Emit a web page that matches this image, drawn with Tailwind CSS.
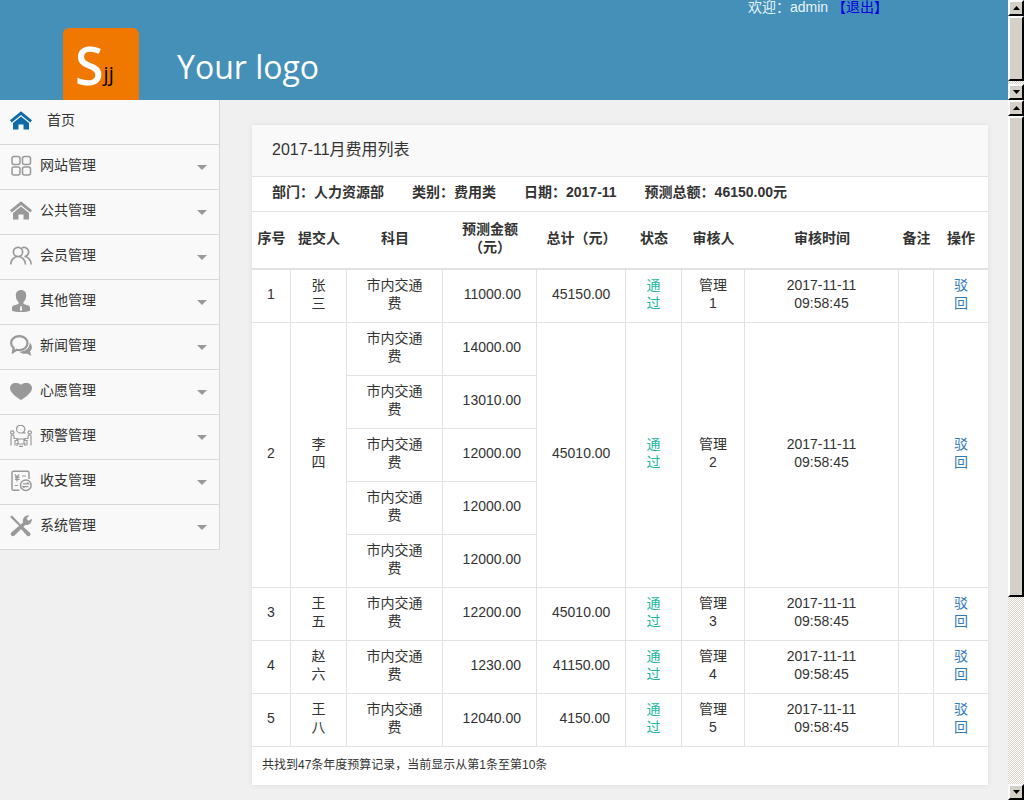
<!DOCTYPE html>
<html lang="zh-CN">
<head>
<meta charset="utf-8">
<meta name="viewport" content="width=device-width, initial-scale=1">
<title>费用列表</title>
<script src="https://cdn.jsdelivr.net/npm/@tailwindcss/browser@4"></script>
</head>
<body class="flex h-screen flex-col overflow-hidden bg-[#f0f0f0] font-['Liberation_Sans','Noto_Sans_CJK_SC',sans-serif] text-sm text-[#333]">

<header class="flex h-[100px] shrink-0 bg-[#4490b9]">
  <div class="flex min-w-0 flex-1 items-start justify-between">
    <div class="flex items-end pl-[63px] pt-7">
      <div class="flex h-[72px] w-[76px] items-start overflow-hidden rounded-t-md bg-[#f07800] pl-3 font-['Open_Sans',sans-serif]">
        <span class="text-[52px] font-semibold leading-[74px] text-white">S</span><span class="text-[20px] leading-[92px] text-black">jj</span>
      </div>
      <p class="pl-[38px] font-['Open_Sans',sans-serif] text-[32px] leading-[66px] text-white">Your logo</p>
    </div>
    <p class="pr-[120px] leading-[14px] text-[#e8f4fb]">欢迎：admin <a href="#" class="text-[#0000dd]">【退出】</a></p>
  </div>
  <div class="flex w-4 shrink-0 flex-col bg-[repeating-conic-gradient(#d4d0c8_0_25%,#ffffff_0_50%)] bg-size-[2px_2px]" aria-hidden="true">
    <div class="flex h-4 items-center justify-center border-2 border-t-white border-l-white border-r-black border-b-black bg-[#d4d0c8]"><svg width="7" height="4" viewBox="0 0 7 4"><path d="M3.5 0L7 4H0z"/></svg></div>
    <div class="h-[65px] border-2 border-t-white border-l-white border-r-black border-b-black bg-[#d4d0c8]"></div>
    <div class="flex-1"></div>
    <div class="flex h-4 items-center justify-center border-2 border-t-white border-l-white border-r-black border-b-black bg-[#d4d0c8]"><svg width="7" height="4" viewBox="0 0 7 4"><path d="M0 0H7L3.5 4z"/></svg></div>
  </div>
</header>

<div class="flex min-h-0 flex-1">
  <nav class="w-[220px] shrink-0">
    <ul id="menu" class="border-r border-[#d8d8d8] bg-[#f9f9f9]"></ul>
  </nav>

  <main class="min-w-0 flex-1 pl-8 pr-5 pt-[25px]">
    <section class="bg-white shadow-[0_0_6px_rgba(0,0,0,0.08)]">
      <h1 class="border-b border-[#e2e2e2] bg-[#f9f9f9] px-5 pt-3 pb-[14px] text-base leading-[25px]">2017-11月费用列表</h1>
      <div class="flex gap-7 border-b border-[#e2e2e2] px-5 pt-[6px] pb-[10px] font-bold leading-[18px]">
        <span>部门：人力资源部</span><span>类别：费用类</span><span>日期：2017-11</span><span>预测总额：46150.00元</span>
      </div>
      <table class="w-full table-fixed border-separate border-spacing-0 text-center leading-[18px]">
        <colgroup>
          <col class="w-[39px]"><col class="w-[56px]"><col class="w-[96px]"><col class="w-[94px]"><col class="w-[89px]"><col class="w-[56px]"><col class="w-[63px]"><col class="w-[154px]"><col class="w-[35px]"><col class="w-[54px]">
        </colgroup>
        <thead>
          <tr class="h-[58px]">
            <th class="border-b-2 border-[#e2e2e2] pb-1">序号</th><th class="border-b-2 border-[#e2e2e2] pb-1">提交人</th><th class="border-b-2 border-[#e2e2e2] pb-1">科目</th><th class="border-b-2 border-[#e2e2e2] px-2 pb-1">预测金额（元）</th><th class="border-b-2 border-[#e2e2e2] pb-1">总计（元）</th><th class="border-b-2 border-[#e2e2e2] pb-1">状态</th><th class="border-b-2 border-[#e2e2e2] pb-1">审核人</th><th class="border-b-2 border-[#e2e2e2] pb-1">审核时间</th><th class="border-b-2 border-[#e2e2e2] pb-1">备注</th><th class="border-b-2 border-[#e2e2e2] pb-1">操作</th>
          </tr>
        </thead>
        <tbody id="rows"></tbody>
      </table>
      <p class="px-[10px] pt-[9px] pb-[10px] text-xs leading-[19px]">共找到47条年度预算记录，当前显示从第1条至第10条</p>
    </section>
  </main>

  <div class="flex w-4 shrink-0 flex-col bg-[repeating-conic-gradient(#d4d0c8_0_25%,#ffffff_0_50%)] bg-size-[2px_2px]" aria-hidden="true">
    <div class="flex h-4 shrink-0 items-center justify-center border-2 border-t-white border-l-white border-r-black border-b-black bg-[#d4d0c8]"><svg width="7" height="4" viewBox="0 0 7 4"><path d="M3.5 0L7 4H0z"/></svg></div>
    <div class="flex-1"><div class="h-[72%] border-2 border-t-white border-l-white border-r-black border-b-black bg-[#d4d0c8]"></div></div>
    <div class="flex h-4 shrink-0 items-center justify-center border-2 border-t-white border-l-white border-r-black border-b-black bg-[#d4d0c8]"><svg width="7" height="4" viewBox="0 0 7 4"><path d="M0 0H7L3.5 4z"/></svg></div>
  </div>
</div>

<script>
const house = '<path fill="currentColor" d="M11 1.200L0 10.200l1.700 2.200L11 5l9.300 7.400 1.700-2.200zM11 6.600L3 13v6.500h5.500V14.500h5v5H19V13z"/>';
const items = [
  ['首页', house],
  ['网站管理', '<g fill="none" stroke="currentColor" stroke-width="1.500"><rect x="2" y="1.500" width="8" height="8" rx="2"/><rect x="12.500" y="1.500" width="8" height="8" rx="2"/><rect x="2" y="12" width="8" height="8" rx="2"/><rect x="12.500" y="12" width="8" height="8" rx="2"/></g>'],
  ['公共管理', house],
  ['会员管理', '<g fill="none" stroke="currentColor" stroke-width="1.700"><path d="M8 2.300a4.600 4.600 0 1 0 0 9.200a4.600 4.600 0 0 0 0-9.200M.8 19.500c0-4.500 3-8 7.200-8s7.500 3.500 7.500 8M12 2.800a4.600 4.600 0 1 1 2.500 8.700c3.500 0 6.600 3.500 6.600 8"/></g>'],
  ['其他管理', '<path fill="currentColor" d="M11 0c-3.300 0-5.200 2.300-5.200 5.500 0 2.500 1 5 2.700 6.500v2L3.500 15.500C2.300 16 2 17 2 18.500v2.200c3 1.700 15 1.700 18 0v-2.200c0-1.500-.3-2.500-1.500-3L13.500 14v-2c1.700-1.500 2.700-4 2.700-6.500C16.200 2.300 14.300 0 11 0z"/><path fill="#fff" d="M10.400 16h1.200l.5 4.500h-2.200z"/>'],
  ['新闻管理', '<path fill="none" stroke="currentColor" stroke-width="2.200" d="M9.300 1.200c4.700 0 8.200 2.900 8.200 6.900s-3.500 7-8.200 7c-1 0-1.800-.1-2.600-.3L3 17l.6-4C2 11.800 1.100 10.200 1.100 8.100c0-4 3.500-6.900 8.200-6.900z"/><path fill="currentColor" d="M19.700 7.500c2.500 2.300 3.200 6 .3 8.800l1.400 4.700-4.500-2.500c-2.800.7-5.500 0-7.200-1.800 5.500 0 10-3.500 10-9.200z"/>'],
  ['心愿管理', '<path fill="currentColor" d="M11 20C7 17.500 0 13 0 8.300 0 5 2.500 3 5.600 3 8 3 10 3.600 11 5c1-1.400 3-2 5.400-2C19.500 3 22 5 22 8.300 22 13 15 17.500 11 20z"/>'],
  ['预警管理', '<g fill="none" stroke="currentColor" stroke-width="1.200"><path d="M6.500 4.200a4.200 3.900 0 1 1 6.800 3L15.500 8H10.700A4.200 3.900 0 0 1 6.500 4.200z"/><circle cx="2.300" cy="7.500" r="1.700"/><circle cx="19.700" cy="7.500" r="1.700"/><path d="M1 20.500v-9q0-1.500 1.500-1.500T4 11.500v2h3v2H5v5M21 20.500v-9q0-1.500-1.500-1.500T18 11.500v2h-3v2h2v5M8 14h6v5H8zM7 21v-3M15 21v-3M9 21.300h4"/></g>'],
  ['收支管理', '<g fill="none" stroke="currentColor" stroke-width="1.500"><path d="M9.500 20.200H3.500a1.500 1.500 0 0 1-1.500-1.500V2.800a1.500 1.500 0 0 1 1.500-1.500h14a1.500 1.500 0 0 1 1.500 1.500V9"/><path stroke-width="1.200" d="M4.800 4.500l2.200 2.500 2.200-2.500M5 7.300h4.500M5 9.300h4.500M7 7v4.500M12 6h4M4.800 15.500h3M13 13.800h5.500l-1.400-1.400M18.500 16.600H13l1.400 1.400"/><circle cx="15.800" cy="15.200" r="5.300"/></g>'],
  ['系统管理', '<path fill="currentColor" d="M.5 1.200L2 .6 10.600 9.500l-1.400 1.400L.6 2.600zM13 11.500l6.900 6.300c1.800 1.800-.7 4.800-2.900 2.900l-6.200-7zM13 7.500c-1-4 2-8 6.300-6.800L16.500 3.500l2 2.200 3.300-2c.5 4.300-2.800 7-6.300 6L4.300 20.800C2.300 22.300-.4 20 1.200 17.600z"/>']
];
document.getElementById('menu').innerHTML = items.map(([label, icon], i) =>
  `<li class="border-b border-[#d8d8d8]"><a href="#" class="flex h-11 items-center pb-[2px] pl-[10px] pr-3">
    <svg class="h-[22px] w-[22px] shrink-0 ${i ? 'text-[#999]' : 'text-[#0f6ba8]'}" viewBox="0 0 22 22">${icon}</svg>
    <span class="flex-1 pb-[2px] leading-[18px] ${i ? 'pl-2' : 'pl-[15px]'}">${label}</span>
    ${i ? '<svg class="mt-[2px] h-[5px] w-[10px] text-[#999]" viewBox="0 0 10 5"><path fill="currentColor" d="M0 0h10L5 5z"/></svg>' : ''}</a></li>`).join('');

const data = [
  ['张三', ['11000.00'], '45150.00'],
  ['李四', ['14000.00', '13010.00', '12000.00', '12000.00', '12000.00'], '45010.00'],
  ['王五', ['12200.00'], '45010.00'],
  ['赵六', ['1230.00'], '41150.00'],
  ['王八', ['12040.00'], '4150.00']
];
const cell = (text, span, extra) =>
  `<td rowspan="${span}" class="border-b border-[#e2e2e2] px-[15px] pb-1 ${extra || 'border-r'}">${text}</td>`;
document.getElementById('rows').innerHTML = data.map(([name, sums, total], i) => {
  const n = sums.length;
  return sums.map((s, k) => '<tr class="h-[53px]">' +
    (k ? '' : cell(i + 1, n) + cell(name, n)) +
    cell('市内交通费', 1) + cell(s, 1, 'border-r text-right') +
    (k ? '' : cell(total, n, 'border-r text-right') +
      cell('通过', n, 'border-r text-[#23b7a0]') + cell('管理' + (i + 1), n) +
      cell('2017-11-11 09:58:45', n) + cell('', n) +
      cell('<a href="#" class="text-[#337ab7]">驳回</a>', n, 'border-r-0')) + '</tr>').join('');
}).join('');
</script>
</body>
</html>
